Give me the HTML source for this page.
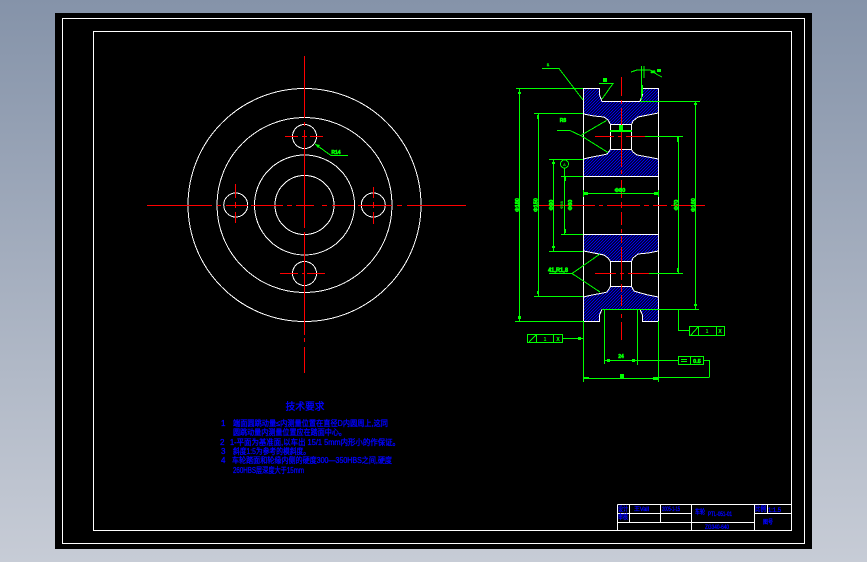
<!DOCTYPE html>
<html>
<head>
<meta charset="utf-8">
<style>
html,body{margin:0;padding:0;width:867px;height:562px;overflow:hidden;background:linear-gradient(to bottom,#8593a9 0%,#c7ccd6 100%);}
svg{position:absolute;left:0;top:0;display:block;}
text{font-family:"Liberation Sans","Noto Sans CJK SC",sans-serif;}
.b text{fill:#0000ff;font-size:8px;stroke:#0000ff;stroke-width:.35px;}
.g text{fill:#00ff00;font-size:6px;font-weight:bold;stroke:#00ff00;stroke-width:.6px;text-anchor:middle;}
</style>
</head>
<body>
<svg width="867" height="562" viewBox="0 0 867 562" xmlns="http://www.w3.org/2000/svg">
<defs>
<pattern id="h" width="3" height="3" patternUnits="userSpaceOnUse">
<rect width="3" height="3" fill="#000"/>
<path d="M0 3L3 0M-1 1L1 -1M2 4L4 2" stroke="#0000ff" stroke-width="1" fill="none"/>
</pattern>
</defs>
<rect x="55" y="13" width="757" height="536" fill="#000"/>

<!-- frames -->
<g fill="none" stroke="#fff" stroke-width="1" shape-rendering="crispEdges">
<rect x="62.5" y="18.5" width="742" height="525"/>
<rect x="93.5" y="31.5" width="698" height="499"/>
<!-- title block -->
<path d="M617.5 504.5H791M617.5 504.5V530M629.5 504.5V522M660.5 504.5V522M691.5 504.5V530M754.5 504.5V530M767.5 504.5V513M617.5 522.5H754M617.5 513.5H691M754.5 513.5H791"/>
</g>

<!-- front view circles -->
<g fill="none" stroke="#fff" stroke-width="1" shape-rendering="crispEdges">
<circle cx="304.5" cy="205" r="116.5"/>
<circle cx="304.5" cy="205" r="87.5"/>
<circle cx="304.5" cy="205" r="50"/>
<circle cx="304.5" cy="205" r="29.5"/>
<circle cx="304.5" cy="136.5" r="12"/>
<circle cx="304.5" cy="273.5" r="12"/>
<circle cx="235.7" cy="205" r="12"/>
<circle cx="373.3" cy="205" r="12"/>
</g>
<g fill="none" stroke="#ff0000" stroke-width="1" shape-rendering="crispEdges">
<path d="M304.5 56V118M304.5 122V126M304.5 130V228M304.5 232V335M304.5 338V342M304.5 347V373"/>
<path d="M147 205.5H212M217 205.5H221M226 205.5H248M251 205.5H283M287 205.5H292M296 205.5H314M322 205.5H327M332 205.5H354M358 205.5H392M397 205.5H402M407 205.5H466"/>
<path d="M285 136.5H298M302 136.5H307M310 136.5H323M280 273.5H298M302 273.5H304M307 273.5H325"/>
<path d="M235.5 184V198M235.5 202V208M235.5 212V223M373.5 187V198M373.5 202V208M373.5 212V224"/>
</g>
<path d="M315 144L331 155.5H348" fill="none" stroke="#00ff00" stroke-width="1" shape-rendering="crispEdges"/>
<path d="M315 144L320 145L318 148Z" fill="#00ff00"/>

<!-- section hatch -->
<g fill="url(#h)" stroke="none">
<path d="M583 88H599V95L602 101H640L642 95V88H658V113L648 115L638 117L633 121L632 124H610L608 120L604 117L594 116L583 114Z"/>
<path d="M610 149H632L633 152L637 155L648 157L658 159V176H583V159L592 157L603 155L607 154Z"/>
<path d="M583 234H658V251L648 253L638 254L633 258L632 261H610L608 258L604 255L594 253L583 251Z"/>
<path d="M610 286H632L634 291L637 292L648 295L658 297V321H642V315L640 309H602L599 315V321H583V297L592 295L603 293L607 292Z"/>
</g>
<!-- section outline -->
<g fill="none" stroke="#fff" stroke-width="1" shape-rendering="crispEdges">
<path d="M583.5 88.5H599.5V95L602 101.5H640L642.5 95V88.5H658.5V321.5H642.5V315L640 309.5H602L599.5 315V321.5H583.5Z"/>
<path d="M583.5 114L594 116L604 117L608 120L610.5 124.5H631.5L633 121L638 117L648 115L658.5 113"/>
<path d="M610.5 124.5V149.5H631.5V124.5"/>
<path d="M583.5 159L592 157L603 155L607 154L610.5 149.5M631.5 149.5L633 152L637 155L648 157L658.5 159"/>
<path d="M583.5 176.5H658.5M583.5 234.5H658.5"/>
<path d="M583.5 251L594 253L604 255L608 258L610.5 261.5H631.5L633 258L638 254L648 253L658.5 251"/>
<path d="M610.5 261.5V286.5H631.5V261.5"/>
<path d="M583.5 297L592 295L603 293L607 292L610.5 286.5M631.5 286.5L634 291L637 292L648 295L658.5 297"/>
</g>
<!-- section centre lines -->
<g fill="none" stroke="#ff0000" stroke-width="1" shape-rendering="crispEdges">
<path d="M621.5 77V96M621.5 100V104M621.5 108V167M621.5 170V174M621.5 180V198M621.5 202V208M621.5 212V225M621.5 229V233M621.5 236V243M621.5 247V280M621.5 284V292M621.5 295V306M621.5 314V318M621.5 322V340"/>
<path d="M538 205.5H595M599 205.5H603M607 205.5H640M644 205.5H649M653 205.5H667M671 205.5H705"/>
<path d="M595 136.5H614M618 136.5H622M626 136.5H645M595 273.5H616M620 273.5H624M628 273.5H649"/>
</g>

<!-- green dimensions -->
<g fill="none" stroke="#00ff00" stroke-width="1" shape-rendering="crispEdges">
<path d="M516 88.5H583M515 321.5H583M519.5 88V321"/>
<path d="M534 113.5H583M534 296.5H583M538.5 113V296"/>
<path d="M549 159.5H583M549 251.5H583M553.5 159V251"/>
<path d="M561 176.5H583M561 234.5H583M564.5 168V234"/>
<path d="M640 101.5H700M602 309.5H699M695.5 101V309"/>
<path d="M645 136.5H683M649 273.5H683M678.5 136V273"/>
<path d="M587 193.5H656"/>
<path d="M583.5 190V197M658.5 190V197"/>
<path d="M604.5 309V364M637.5 309V365M604 360.5H678M703 360.5H709.5V377.5"/>
<path d="M583.5 321V382M658.5 321V382M583 378.5H658M658 377.5H709"/>
<path d="M563 338.5H583M678.5 309V330.5H689"/>
<rect x="527.5" y="334.5" width="35" height="8"/>
<path d="M536.5 334V343M553.5 334V343M529 342L536 335"/>
<rect x="689.5" y="326.5" width="35" height="9"/>
<path d="M698.5 326V336M716.5 326V336M691 335L698 327"/>
<rect x="678.5" y="356.5" width="25" height="8"/>
<path d="M690.5 356V365M681 359.5H687M681 361.5H687"/>
<path d="M542 68.5H559L583 100"/>
<path d="M599 83.5H613L602 99"/>
<path d="M557 130.5H570L581.5 136L608 152.5M581.5 135L606.5 120.5"/>
<path d="M549 273.5H572L600 254M572 273.5L600 292"/>
<path d="M641.5 66V100M644 66V78M631 72L637 70H650L658 75L662 77"/>
<circle cx="564.5" cy="164" r="4"/>
</g>
<g fill="#00ff00" shape-rendering="crispEdges">
<rect x="610" y="130" width="22" height="2"/><rect x="619" y="125" width="4" height="5"/>
<rect x="603" y="78" width="4" height="4"/>
<rect x="641" y="85" width="2" height="9"/>
<rect x="657" y="69" width="4" height="3"/>
<rect x="584" y="192" width="4" height="3"/><rect x="654" y="192" width="4" height="3"/>
<rect x="584" y="377" width="5" height="2"/><rect x="653" y="377" width="5" height="3"/>
<rect x="518" y="92" width="3" height="2"/><rect x="518" y="316" width="3" height="3"/>
<rect x="537" y="115" width="2" height="4"/><rect x="537" y="291" width="2" height="3"/>
<rect x="552" y="162" width="3" height="2"/><rect x="552" y="246" width="3" height="2"/>
<rect x="564" y="176" width="2" height="5"/><rect x="564" y="229" width="2" height="4"/>
<rect x="694" y="103" width="3" height="2"/><rect x="694" y="304" width="3" height="2"/>
<rect x="677" y="137" width="2" height="5"/><rect x="677" y="268" width="2" height="4"/>
<rect x="607" y="359" width="3" height="3"/><rect x="632" y="359" width="3" height="3"/>
<rect x="578" y="337" width="3" height="3"/>
<rect x="620" y="374" width="4" height="4"/>
</g>
<g class="g">
<text x="548" y="66" style="font-size:4px">1</text>
<text x="563" y="122" style="font-size:5px">R8</text>
<text x="336" y="154" style="font-size:5px">R14</text>
<text x="620" y="192" style="font-size:5.5px">Φ80</text>
<text x="621" y="358" style="font-size:5px">24</text>
<text x="558" y="272" style="font-size:6px" textLength="20" lengthAdjust="spacingAndGlyphs">41,R1,8</text>
<text x="564.5" y="166" style="font-size:4px;stroke-width:0">A</text>
<text x="545" y="341" style="font-size:5px;stroke-width:0">1</text>
<text x="558" y="341" style="font-size:5px;stroke-width:.2px">X</text>
<text x="707" y="333" style="font-size:5px;stroke-width:0">1</text>
<text x="720" y="333" style="font-size:5px;stroke-width:.2px">X</text>
<text x="697" y="363" style="font-size:5.5px">0.5</text>
<text x="653" y="73" style="font-size:4px">30</text>
<text transform="translate(519,205) rotate(-90)" style="font-size:5.5px">Φ180</text>
<text transform="translate(537.5,205) rotate(-90)" style="font-size:5.5px">Φ150</text>
<text transform="translate(553,205) rotate(-90)" style="font-size:5.5px">Φ90</text>
<text transform="translate(563,205) rotate(-90)" style="font-size:4px;stroke-width:0">Φ58</text>
<text transform="translate(572,205) rotate(-90)" style="font-size:5.5px">Φ60</text>
<text transform="translate(678,205) rotate(-90)" style="font-size:5.5px">Φ70</text>
<text transform="translate(695,205) rotate(-90)" style="font-size:5.5px">Φ160</text>
</g>

<!-- technical requirements -->
<g class="b">
<text x="285.5" y="410" style="font-size:10px" textLength="39" lengthAdjust="spacingAndGlyphs">技术要求</text>
<text x="221" y="426">1</text>
<text x="233" y="426" textLength="155" lengthAdjust="spacingAndGlyphs">端面圆跳动量≤内测量位置在直径D内圆周上,这同</text>
<text x="233" y="435" textLength="113" lengthAdjust="spacingAndGlyphs">圆跳动量内测量位置应在踏面中心。</text>
<text x="220" y="445">2</text>
<text x="230" y="445" textLength="170" lengthAdjust="spacingAndGlyphs">1-平面为基准面,以车出 15/1 5mm内形小的作保证。</text>
<text x="221" y="454">3</text>
<text x="233" y="454" textLength="77" lengthAdjust="spacingAndGlyphs">斜度1:5为参考的模斜度。</text>
<text x="221" y="463">4</text>
<text x="232" y="463" textLength="160" lengthAdjust="spacingAndGlyphs">车轮踏面和轮缘内侧的硬度300—350HBS之间,硬度</text>
<text x="233" y="473" textLength="71" lengthAdjust="spacingAndGlyphs">260HBS层深度大于15mm</text>
</g>

<!-- title block text -->
<g class="b">
<text x="618" y="511" style="font-size:7px" textLength="10" lengthAdjust="spacingAndGlyphs">设计</text>
<text x="634" y="511" style="font-size:6px" textLength="15" lengthAdjust="spacingAndGlyphs">王Vall</text>
<text x="662" y="511" style="font-size:6px" textLength="18" lengthAdjust="spacingAndGlyphs">2005-1-15</text>
<text x="618" y="519" style="font-size:7px" textLength="10" lengthAdjust="spacingAndGlyphs">审核</text>
<text x="695" y="514" style="font-size:7px" textLength="10" lengthAdjust="spacingAndGlyphs">车轮</text>
<text x="708" y="516" style="font-size:6px" textLength="24" lengthAdjust="spacingAndGlyphs">PTL-051-01</text>
<text x="705" y="529" style="font-size:6px" textLength="24" lengthAdjust="spacingAndGlyphs">ZG340-640</text>
<text x="755" y="511" style="font-size:7px" textLength="11" lengthAdjust="spacingAndGlyphs">比例</text>
<text x="768" y="512" style="font-size:6px" textLength="13" lengthAdjust="spacingAndGlyphs">1:1.5</text>
<text x="763" y="524" style="font-size:6px" textLength="10" lengthAdjust="spacingAndGlyphs">图号</text>
</g>
</svg>
</body>
</html>
